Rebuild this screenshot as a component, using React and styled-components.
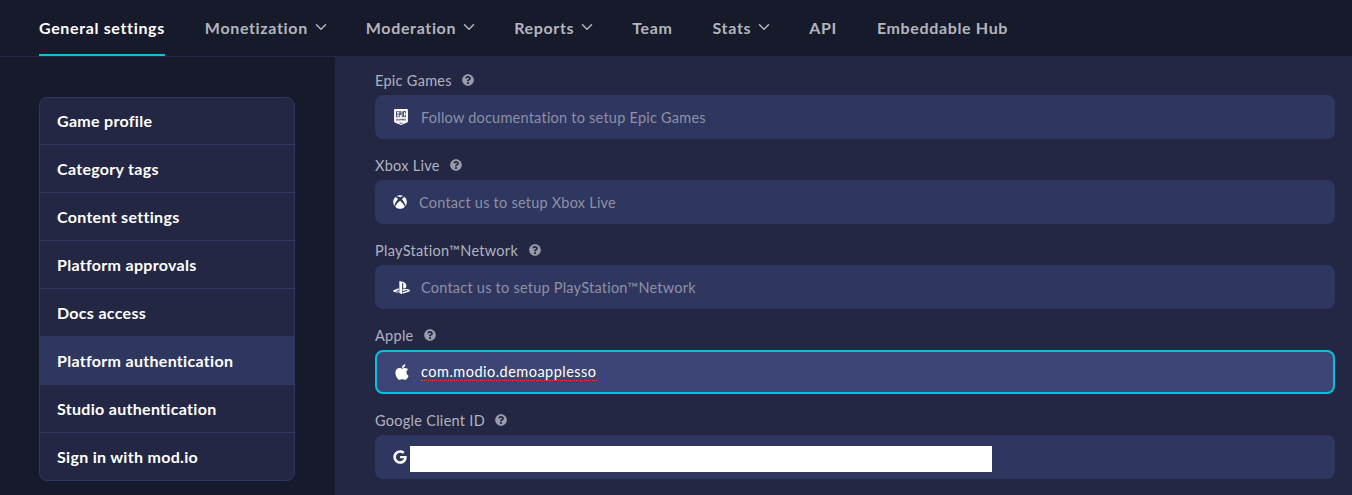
import React from "react";
import styled, { createGlobalStyle } from "styled-components";
import { FaXbox, FaPlaystation, FaApple, FaGoogle, FaQuestionCircle } from "react-icons/fa";
import { SiEpicgames } from "react-icons/si";
import { FiChevronDown } from "react-icons/fi";

const Global = createGlobalStyle`
  html, body { margin: 0; padding: 0; background: #161a2b; overflow: hidden; }
  body { font-family: "Lato", "Liberation Sans", sans-serif; }
  * { box-sizing: border-box; }
`;

const Page = styled.div`
  width: 1352px;
  height: 495px;
  display: flex;
  flex-direction: column;
  overflow: hidden;
`;

const Nav = styled.nav`
  height: 57px;
  flex: none;
  display: flex;
  gap: 40px;
  padding-left: 39px;
  background: #161a2b;
  border-bottom: 1px solid #232744;
`;

const NavItem = styled.a`
  height: 56px;
  display: flex;
  align-items: center;
  gap: 4px;
  font-size: 16px;
  font-weight: 700;
  letter-spacing: 0.65px;
  color: ${(p) => (p.$active ? "#ffffff" : "#b4b5bd")};
  border-bottom: 2px solid ${(p) => (p.$active ? "#00c4dc" : "transparent")};
  svg { font-size: 18px; margin-right: -4px; stroke-width: 2; }
`;

const Body = styled.div`
  flex: 1;
  display: flex;
  min-height: 0;
`;

const Side = styled.aside`
  width: 335px;
  flex: none;
  padding: 40px 40px 0 39px;
  background: #161a2b;
`;

const Menu = styled.ul`
  list-style: none;
  margin: 0;
  padding: 0;
  width: 256px;
  height: 384px;
  background: #232744;
  border: 1px solid #2f3660;
  border-radius: 8px;
  overflow: hidden;
`;

const MenuItem = styled.li`
  height: 48px;
  display: flex;
  align-items: center;
  padding-left: 17px;
  font-size: 16px;
  font-weight: 700;
  letter-spacing: 0.3px;
  color: #ffffff;
  background: ${(p) => (p.$active ? "#2f3660" : "transparent")};
  border-bottom: 1px solid #2f3660;
  &:first-child { height: 47px; padding-bottom: 1px; }
  &:last-child { border-bottom: 0; padding-bottom: 2px; }
`;

const Main = styled.main`
  flex: 1;
  background: #232744;
  padding: 14px 17px 0 40px;
  display: flex;
  flex-direction: column;
  gap: 17px;
`;

const Field = styled.div`
  display: flex;
  flex-direction: column;
  gap: 6px;
`;

const Label = styled.label`
  height: 18px;
  display: flex;
  align-items: center;
  gap: 10.5px;
  font-size: 14.5px;
  letter-spacing: 0.28px;
  color: #b1b3c0;
  svg { font-size: 12px; color: #9a9cab; }
`;

const InputBox = styled.div`
  height: 44px;
  display: flex;
  align-items: center;
  padding-left: ${(p) => (p.$focus ? "16px" : "18px")};
  border-radius: 8px;
  background: ${(p) => (p.$focus ? "#3c4575" : "#2f3660")};
  border: ${(p) => (p.$focus ? "2px solid #00c4dc" : "0")};
`;

const IconSlot = styled.span`
  width: ${(p) => p.$w}px;
  flex: none;
  display: flex;
  align-items: center;
  color: #ffffff;
  font-size: ${(p) => p.$size}px;
`;

const Placeholder = styled.span`
  font-size: 14.5px;
  letter-spacing: 0.23px;
  color: #8e91a6;
`;

const Value = styled.span`
  font-size: 14.5px;
  letter-spacing: 0.48px;
  line-height: 17px;
  color: #ffffff;
  border-bottom: 1px dotted #e0403f;
`;

const Redaction = styled.span`
  width: 582px;
  height: 26px;
  margin-top: 4px;
  background: #ffffff;
`;

const navItems = [
  ["General settings", false, true],
  ["Monetization", true],
  ["Moderation", true],
  ["Reports", true],
  ["Team"],
  ["Stats", true],
  ["API"],
  ["Embeddable Hub"],
];

const menu = [
  "Game profile",
  "Category tags",
  "Content settings",
  "Platform approvals",
  "Docs access",
  "Platform authentication",
  "Studio authentication",
  "Sign in with mod.io",
];

const fields = [
  { label: "Epic Games", icon: <SiEpicgames />, w: 28, size: 16, text: "Follow documentation to setup Epic Games" },
  { label: "Xbox Live", icon: <FaXbox />, w: 26, size: 14, text: "Contact us to setup Xbox Live" },
  { label: "PlayStation™Network", icon: <FaPlaystation />, w: 28, size: 17, text: "Contact us to setup PlayStation™Network" },
  { label: "Apple", icon: <FaApple />, w: 28, size: 18, value: "com.modio.demoapplesso", focus: true },
  { label: "Google Client ID", icon: <FaGoogle />, w: 17, size: 14, redacted: true },
];

export default function App() {
  return (
    <Page>
      <Global />
      <Nav>
        {navItems.map(([name, chev, active]) => (
          <NavItem key={name} $active={active}>
            {name}
            {chev && <FiChevronDown />}
          </NavItem>
        ))}
      </Nav>
      <Body>
        <Side>
          <Menu>
            {menu.map((m) => (
              <MenuItem key={m} $active={m === "Platform authentication"}>{m}</MenuItem>
            ))}
          </Menu>
        </Side>
        <Main>
          {fields.map((f) => (
            <Field key={f.label}>
              <Label>
                {f.label}
                <FaQuestionCircle />
              </Label>
              <InputBox $focus={f.focus}>
                <IconSlot $w={f.w} $size={f.size}>{f.icon}</IconSlot>
                {f.text && <Placeholder>{f.text}</Placeholder>}
                {f.value && <Value>{f.value}</Value>}
                {f.redacted && <Redaction />}
              </InputBox>
            </Field>
          ))}
        </Main>
      </Body>
    </Page>
  );
}
